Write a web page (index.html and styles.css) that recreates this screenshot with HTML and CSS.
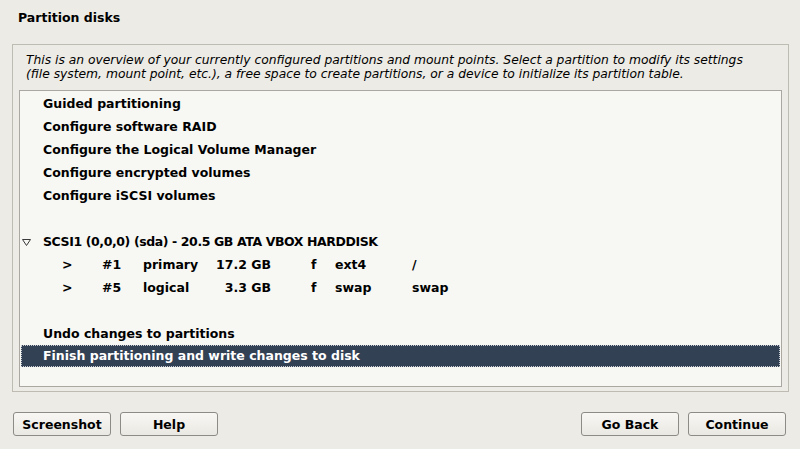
FILE: index.html
```html
<!DOCTYPE html>
<html lang="en">
<head>
    <meta charset="UTF-8">
    <title>Partition disks</title>
    <link rel="stylesheet" href="styles.css">
</head>
<body>
    <h1 class="title">Partition disks</h1>

    <div class="frame">
        <p class="intro">This is an overview of your currently configured partitions and mount points. Select a partition to modify its settings (file system, mount point, etc.), a free space to create partitions, or a device to initialize its partition table.</p>

        <ul class="list">
            <li class="row">Guided partitioning</li>
            <li class="row">Configure software RAID</li>
            <li class="row">Configure the Logical Volume Manager</li>
            <li class="row">Configure encrypted volumes</li>
            <li class="row">Configure iSCSI volumes</li>
            <li class="row"></li>
            <li class="row disk">
                <svg class="toggle" width="9" height="7" viewBox="0 0 9 7"><path d="M0.5 0.5 H8.5 L4.5 6.5 Z" fill="none" stroke="#3a3a3a" stroke-width="1"/></svg>
                <span class="disk-name">SCSI1 (0,0,0) (sda) - 20.5 GB ATA VBOX HARDDISK</span>
            </li>
            <li class="row part">
                <span>&gt;</span><span>#1</span><span>primary</span><span class="size">17.2 GB</span><span>f</span><span>ext4</span><span>/</span>
            </li>
            <li class="row part">
                <span>&gt;</span><span>#5</span><span>logical</span><span class="size">3.3 GB</span><span>f</span><span>swap</span><span>swap</span>
            </li>
            <li class="row"></li>
            <li class="row">Undo changes to partitions</li>
            <li class="row selected">Finish partitioning and write changes to disk</li>
        </ul>
    </div>

    <div class="buttons">
        <div class="group">
            <button>Screenshot</button>
            <button>Help</button>
        </div>
        <div class="group">
            <button>Go Back</button>
            <button>Continue</button>
        </div>
    </div>
</body>
</html>
```

FILE: styles.css
```css
/* General styling */
body {
    margin: 0;
    height: 449px;
    font-family: "DejaVu Sans", sans-serif;
    background-color: #edebe5;
    color: #000;
    overflow: hidden;
}

.title {
    margin: 0;
    padding: 10px 18px 0;
    height: 34px;
    font-size: 12.5px;
    font-weight: bold;
    line-height: 16px;
}

/* Outer frame */
.frame {
    margin: 0 11px 0 12px;
    height: 346px;
    border: 1px solid #bebbb2;
    padding: 0 6px;
}

.intro {
    margin: 0;
    padding: 8px 27px 0 7px;
    height: 37px;
    font-size: 12.3px;
    font-style: italic;
    line-height: 14px;
}

/* Partition list */
.list {
    list-style: none;
    margin: 0;
    padding: 2px 0 0;
    height: 293px;
    background-color: #f7f7f3;
    border: 1px solid #aaa8a0;
}

.row {
    height: 22px;
    margin: 0 1px 1px;
    padding-left: 22px;
    font-size: 12.5px;
    font-weight: bold;
    line-height: 22px;
    white-space: nowrap;
}

.disk {
    padding-left: 1px;
    display: flex;
    align-items: center;
    gap: 12px;
}

.disk-name {
    letter-spacing: -0.4px;
}

.part {
    padding-left: 41px;
    display: grid;
    grid-template-columns: 40px 41px 60px 108px 24px 77px auto;
}

.part .size {
    padding-right: 40px;
    text-align: right;
}

.selected {
    margin-top: -1px;
    height: 22px;
    background-color: #334155;
    color: #fff;
    outline: 1px dotted #c8ccd2;
    outline-offset: -1px;
}

/* Buttons */
.buttons {
    display: flex;
    justify-content: space-between;
    padding: 20px 14px 0 13px;
}

.group {
    display: flex;
    gap: 9px;
}

button {
    width: 98px;
    height: 24px;
    padding: 0;
    font-family: "DejaVu Sans", sans-serif;
    font-size: 12.5px;
    font-weight: bold;
    color: #000;
    background: linear-gradient(#f8f7f4, #eae8e2);
    border: 1px solid #8d8b85;
    border-radius: 3px;
}
```
